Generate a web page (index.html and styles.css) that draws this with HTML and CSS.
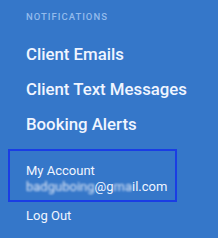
FILE: index.html
```html
<!DOCTYPE html>
<html>
<head><link rel="stylesheet" href="styles.css"></head>
<body>
<div class="menu">
  <div class="heading">NOTIFICATIONS</div>
  <nav class="items">
    <a class="item">Client Emails</a>
    <a class="item">Client Text Messages</a>
    <a class="item">Booking Alerts</a>
  </nav>
  <div class="account">
    <div class="acc-title">My Account</div>
    <div class="acc-email"><span class="blur">badguboing</span>@g<span class="blur">ma</span>il.com</div>
  </div>
  <a class="logout">Log Out</a>
</div>
</body>
</html>
```
FILE: styles.css
```css
html, body { margin: 0; padding: 0; }
body {
  background: #3577c9;
  font-family: Roboto, "Liberation Sans", sans-serif;
  color: #f0f5ff;
  width: 218px;
  height: 238px;
  overflow: hidden;
}
.menu { display: flex; flex-direction: column; padding-top: 11px; }
.heading {
  padding-left: 26px;
  font-size: 9.5px;
  letter-spacing: 1px;
  color: #93bbec;
  font-weight: 500;
  line-height: 12px;
}
.items { display: flex; flex-direction: column; margin-top: 14px; }
.item {
  display: block;
  padding-left: 26px;
  font-size: 16.8px;
  font-weight: 500;
  line-height: 35px;
}
.account {
  margin: 7px 0 0 8px;
  width: 149px;
  border: 2px solid #1a3de4;
  padding: 12px 0 5px 16px;
  font-size: 13px;
  line-height: 16px;
  white-space: nowrap;
}
.blur { filter: blur(1px); color: #dfe8f7; }
.logout {
  display: block;
  padding-left: 26px;
  margin-top: 6px;
  font-size: 13px;
  line-height: 16px;
}
```
